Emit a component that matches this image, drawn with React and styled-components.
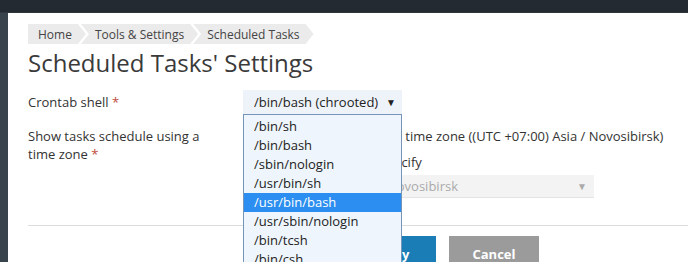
import React from 'react'
import styled, { createGlobalStyle } from 'styled-components'

const GlobalStyle = createGlobalStyle`
  html, body {
    margin: 0;
    padding: 0;
  }
  body {
    width: 688px;
    height: 262px;
    overflow: hidden;
    background: #fff;
    color: #333;
    font-family: "Open Sans", "Liberation Sans", sans-serif;
    font-size: 13px;
  }
`

const Page = styled.div`
  height: 262px;
  display: flex;
  flex-direction: column;
`

const TopBar = styled.div`
  flex: none;
  height: 13px;
  box-sizing: border-box;
  background: #232a32;
  border-bottom: 1px solid #2f363e;
`

const Body = styled.div`
  flex: 1;
  display: flex;
  min-height: 0;
`

const SideRail = styled.div`
  flex: none;
  width: 8px;
  background: #38434c;
`

const Main = styled.main`
  flex: 1;
  min-width: 0;
  padding: 11px 0 0 20px;
`

const Crumbs = styled.ol`
  display: flex;
  height: 20px;
  margin: 0;
  padding: 0;
  list-style: none;
`

const Crumb = styled.li`
  display: flex;
  align-items: center;
  background: #ebebeb;
  color: #444;
  font-size: 12px;
  padding: ${p => (p.$first ? '0 14px 0 10px' : '0 14px')};
  margin-left: ${p => (p.$first ? '0' : '-5px')};
  clip-path: ${p =>
    p.$first
      ? 'polygon(0 0, calc(100% - 8px) 0, 100% 50%, calc(100% - 8px) 100%, 0 100%)'
      : 'polygon(0 0, calc(100% - 8px) 0, 100% 50%, calc(100% - 8px) 100%, 0 100%, 8px 50%)'};
`

const Title = styled.h1`
  margin: 3px 0 0;
  font-size: 24px;
  line-height: 32px;
  font-weight: 400;
  color: #3a3a3a;
`

const FormRow = styled.div`
  display: grid;
  grid-template-columns: 200px 1fr;
  column-gap: 15px;
  align-items: ${p => p.$align || 'start'};
  margin-top: ${p => p.$gap || 0}px;
`

const Label = styled.label`
  line-height: 18px;
  color: #333;
`

const Required = styled.span`
  color: #c04a3a;
`

const SelectWrap = styled.div`
  position: relative;
  width: 159px;
`

const SelectBox = styled.div`
  height: 24px;
  box-sizing: border-box;
  display: flex;
  align-items: center;
  justify-content: space-between;
  padding: 0 6px 0 11px;
  background: #edf3f9;
  color: #222;
`

const Caret = styled.span`
  font-size: 10px;
  color: ${p => (p.$muted ? '#aaa' : '#222')};
`

const Listbox = styled.ul`
  position: absolute;
  top: 100%;
  left: 0;
  right: 0;
  z-index: 10;
  margin: 0;
  padding: 2px 0;
  list-style: none;
  background: #eef5fc;
  border: 1px solid #7694b8;
`

const Option = styled.li`
  height: 19px;
  line-height: 19px;
  padding: 0 10px;
  background: ${p => (p.$active ? '#2b8ef0' : 'transparent')};
  color: ${p => (p.$active ? '#fff' : '#222')};
`

const Choices = styled.div`
  display: flex;
  flex-direction: column;
  padding-left: 117px;
`

const Choice = styled.label`
  display: flex;
  align-items: center;
  gap: 6px;
  height: 18px;
  line-height: 18px;
  white-space: nowrap;
  margin-top: ${p => p.$gap || 0}px;
`

const Radio = styled.span`
  width: 13px;
  height: 13px;
  box-sizing: border-box;
  border-radius: 50%;
  border: 1px solid #999;
  background: #fff;
`

const TzSelect = styled.div`
  width: 215px;
  height: 23px;
  margin: 4px 0 0 19px;
  box-sizing: border-box;
  display: flex;
  align-items: center;
  justify-content: space-between;
  padding: 0 7px 0 8px;
  background: #f3f3f3;
  border-bottom: 1px solid #e4e4e4;
  color: #aaa;
`

const Rule = styled.hr`
  margin: 27px 0 0;
  border: 0;
  border-top: 1px solid #dcdcdc;
`

const ButtonBar = styled.div`
  display: flex;
  gap: 13px;
  margin-top: 10px;
  padding-left: 215px;
`

const Button = styled.button`
  width: 90px;
  height: 36px;
  border: 0;
  padding: 0;
  font-family: inherit;
  font-size: 13px;
  font-weight: 700;
  color: #fff;
  background: ${p => (p.$primary ? '#1a7db6' : '#9b9b9b')};
`

const shells = [
  '/bin/sh',
  '/bin/bash',
  '/sbin/nologin',
  '/usr/bin/sh',
  '/usr/bin/bash',
  '/usr/sbin/nologin',
  '/bin/tcsh',
  '/bin/csh',
]

export default function App() {
  return (
    <Page>
      <GlobalStyle />
      <TopBar />
      <Body>
        <SideRail />
        <Main>
          <Crumbs>
            <Crumb $first>Home</Crumb>
            <Crumb>Tools &amp; Settings</Crumb>
            <Crumb>Scheduled Tasks</Crumb>
          </Crumbs>
          <Title>Scheduled Tasks' Settings</Title>

          <FormRow $align="center" $gap={11}>
            <Label>Crontab shell <Required>*</Required></Label>
            <SelectWrap>
              <SelectBox>
                <span>/bin/bash (chrooted)</span>
                <Caret>▼</Caret>
              </SelectBox>
              <Listbox>
                {shells.map(shell => (
                  <Option key={shell} $active={shell === '/usr/bin/bash'}>{shell}</Option>
                ))}
              </Listbox>
            </SelectWrap>
          </FormRow>

          <FormRow $gap={13}>
            <Label>Show tasks schedule using a time zone <Required>*</Required></Label>
            <Choices>
              <Choice><Radio />Use time zone ((UTC +07:00) Asia / Novosibirsk)</Choice>
              <Choice $gap={8}><Radio />Specify</Choice>
              <TzSelect>
                <span>Novosibirsk</span>
                <Caret $muted>▼</Caret>
              </TzSelect>
            </Choices>
          </FormRow>

          <Rule />
          <ButtonBar>
            <Button $primary>OK</Button>
            <Button $primary>Apply</Button>
            <Button>Cancel</Button>
          </ButtonBar>
        </Main>
      </Body>
    </Page>
  )
}
